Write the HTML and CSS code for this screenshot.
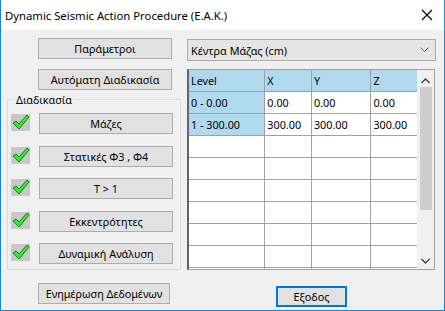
FILE: index.html
```html
<!DOCTYPE html>
<html lang="el">
<head>
    <meta charset="UTF-8">
    <title>Dynamic Seismic Action Procedure (E.A.K.)</title>
    <link rel="stylesheet" href="styles.css">
</head>
<body>
    <div class="window">
        <div class="titlebar">
            <span class="title">Dynamic Seismic Action Procedure (E.A.K.)</span>
            <svg class="close" width="12" height="12" viewBox="0 0 12 12">
                <path d="M1 1 L11 11 M11 1 L1 11" stroke="#000" stroke-width="1.1" fill="none"/>
            </svg>
        </div>
        <div class="content">
            <div class="left">
                <button class="btn top-btn">Παράμετροι</button>
                <button class="btn top-btn second">Αυτόματη Διαδικασία</button>
                <fieldset class="group">
                    <legend>Διαδικασία</legend>
                    <div class="step">
                        <span class="check"><svg width="19" height="17" viewBox="0 0 19 17"><path d="M2 9 L5 7 L8 10 L16 1 L18 3 L8 15 Z" fill="#2ef02e" stroke="#1f7a1f" stroke-width="1" stroke-linejoin="round"/></svg></span>
                        <button class="btn">Μάζες</button>
                    </div>
                    <div class="step">
                        <span class="check"><svg width="19" height="17" viewBox="0 0 19 17"><path d="M2 9 L5 7 L8 10 L16 1 L18 3 L8 15 Z" fill="#2ef02e" stroke="#1f7a1f" stroke-width="1" stroke-linejoin="round"/></svg></span>
                        <button class="btn">Στατικές Φ3 , Φ4</button>
                    </div>
                    <div class="step">
                        <span class="check"><svg width="19" height="17" viewBox="0 0 19 17"><path d="M2 9 L5 7 L8 10 L16 1 L18 3 L8 15 Z" fill="#2ef02e" stroke="#1f7a1f" stroke-width="1" stroke-linejoin="round"/></svg></span>
                        <button class="btn">T &gt; 1</button>
                    </div>
                    <div class="step">
                        <span class="check"><svg width="19" height="17" viewBox="0 0 19 17"><path d="M2 9 L5 7 L8 10 L16 1 L18 3 L8 15 Z" fill="#2ef02e" stroke="#1f7a1f" stroke-width="1" stroke-linejoin="round"/></svg></span>
                        <button class="btn">Εκκεντρότητες</button>
                    </div>
                    <div class="step">
                        <span class="check"><svg width="19" height="17" viewBox="0 0 19 17"><path d="M2 9 L5 7 L8 10 L16 1 L18 3 L8 15 Z" fill="#2ef02e" stroke="#1f7a1f" stroke-width="1" stroke-linejoin="round"/></svg></span>
                        <button class="btn">Δυναμική Ανάλυση</button>
                    </div>
                </fieldset>
                <button class="btn update-btn">Ενημέρωση Δεδομένων</button>
            </div>
            <div class="right">
                <div class="combo">
                    <span>Κέντρα Μάζας (cm)</span>
                    <svg width="9" height="6" viewBox="0 0 9 6"><path d="M0.5 0.5 L4.5 4.5 L8.5 0.5" stroke="#606060" fill="none"/></svg>
                </div>
                <div class="grid">
                    <div class="cells">
                        <div class="row">
                            <div class="cell head c-level">Level</div>
                            <div class="cell head c-x">X</div>
                            <div class="cell head c-y">Y</div>
                            <div class="cell head c-z">Z</div>
                        </div>
                        <div class="row">
                            <div class="cell head c-level">0 - 0.00</div>
                            <div class="cell c-x">0.00</div>
                            <div class="cell c-y">0.00</div>
                            <div class="cell c-z">0.00</div>
                        </div>
                        <div class="row">
                            <div class="cell head c-level">1 - 300.00</div>
                            <div class="cell c-x">300.00</div>
                            <div class="cell c-y">300.00</div>
                            <div class="cell c-z">300.00</div>
                        </div>
                        <div class="row"><div class="cell c-level"></div><div class="cell c-x"></div><div class="cell c-y"></div><div class="cell c-z"></div></div>
                        <div class="row"><div class="cell c-level"></div><div class="cell c-x"></div><div class="cell c-y"></div><div class="cell c-z"></div></div>
                        <div class="row"><div class="cell c-level"></div><div class="cell c-x"></div><div class="cell c-y"></div><div class="cell c-z"></div></div>
                        <div class="row"><div class="cell c-level"></div><div class="cell c-x"></div><div class="cell c-y"></div><div class="cell c-z"></div></div>
                        <div class="row"><div class="cell c-level"></div><div class="cell c-x"></div><div class="cell c-y"></div><div class="cell c-z"></div></div>
                        <div class="row"><div class="cell c-level"></div><div class="cell c-x"></div><div class="cell c-y"></div><div class="cell c-z"></div></div>
                        <div class="row"><div class="cell c-level"></div><div class="cell c-x"></div><div class="cell c-y"></div><div class="cell c-z"></div></div>
                    </div>
                    <div class="scrollbar">
                        <svg class="arrow" width="9" height="6" viewBox="0 0 9 6"><path d="M0.5 5 L4.5 1 L8.5 5" stroke="#404040" stroke-width="1.4" fill="none"/></svg>
                        <div class="thumb"></div>
                        <svg class="arrow down" width="9" height="6" viewBox="0 0 9 6"><path d="M0.5 1 L4.5 5 L8.5 1" stroke="#404040" stroke-width="1.4" fill="none"/></svg>
                    </div>
                </div>
                <button class="btn exit-btn">Εξοδος</button>
            </div>
        </div>
    </div>
</body>
</html>
```

FILE: styles.css
```css
body {
    margin: 0;
    font-family: "Noto Sans", "DejaVu Sans", sans-serif;
    font-size: 10.8px;
    color: #000;
}
.window {
    width: 445px;
    height: 311px;
    box-sizing: border-box;
    border: 1px solid #1883d7;
    border-top: none;
    background: #f0f0f0;
    overflow: hidden;
}
.titlebar {
    height: 30px;
    background: #fff;
    display: flex;
    align-items: center;
    justify-content: space-between;
    padding: 0 11px 0 4px;
    font-size: 11.3px;
}
.content {
    display: flex;
    padding: 8px 0 0 6px;
    gap: 6px;
}
.left {
    width: 174px;
    display: flex;
    flex-direction: column;
}
.btn {
    font-family: inherit;
    font-size: 10.8px;
    color: #000;
    background: #e1e1e1;
    border: 1px solid #adadad;
    height: 21px;
    padding: 0;
    width: 134px;
}
.top-btn {
    margin-left: 31px;
}
.second {
    margin-top: 10px;
}
.group {
    margin: 2px 0 0 0;
    padding: 6px 0 5px 3px;
    border: 1px solid #dcdcdc;
    display: flex;
    flex-direction: column;
    gap: 11.5px;
}
.group legend {
    padding: 0 1px;
    margin-left: 4px;
    line-height: 15px;
}
.step {
    display: flex;
    align-items: center;
    gap: 9px;
}
.check {
    width: 19px;
    height: 17px;
    background: #c8c8c8;
    display: flex;
    margin-top: -2px;
}
.update-btn {
    margin: 13px 0 0 31px;
    width: 132px;
}
.right {
    width: 249px;
    display: flex;
    flex-direction: column;
}
.combo {
    margin-top: 1px;
    height: 22px;
    box-sizing: border-box;
    border: 1px solid #adadad;
    background: #e5e5e5;
    display: flex;
    align-items: center;
    justify-content: space-between;
    padding: 0 6px 0 3px;
}
.grid {
    margin-top: 8px;
    width: 248px;
    height: 201px;
    box-sizing: border-box;
    border: 1px solid #a0a0a0;
    border-left: 2px solid #646464;
    background: #fff;
    display: flex;
    overflow: hidden;
}
.cells {
    flex: 1;
    overflow: hidden;
}
.row {
    display: flex;
    height: 22px;
}
.cell {
    box-sizing: border-box;
    height: 22px;
    border-right: 1px solid #a0a0a0;
    border-bottom: 1px solid #a0a0a0;
    padding: 3px 0 0 2px;
    white-space: nowrap;
    overflow: hidden;
    background: #fff;
}
.cell.head {
    background: #b1d9ee;
}
.c-level { width: 77px; }
.c-x { width: 47px; }
.c-y { width: 60px; }
.c-z { width: 46px; border-right: none; }
.scrollbar {
    width: 17px;
    background: #f0f0f0;
    display: flex;
    flex-direction: column;
    align-items: center;
}
.arrow {
    margin-top: 8px;
}
.thumb {
    width: 12px;
    height: 123px;
    background: #cdcdcd;
    margin-top: 3px;
}
.arrow.down {
    margin-top: auto;
    margin-bottom: 5px;
}
.exit-btn {
    margin: 16px auto 0;
    width: 71px;
    height: 21px;
    border: 2px solid #0078d7;
}
```
